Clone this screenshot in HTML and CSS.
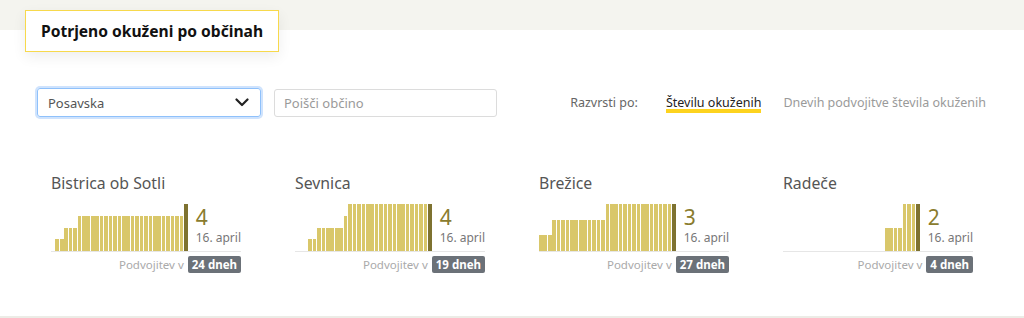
FILE: index.html
```html
<!DOCTYPE html>
<html lang="sl">
<head>
<meta charset="utf-8">
<link rel="stylesheet" href="styles.css">
</head>
<body>
<div class="page">
  <div class="wrap">
    <div class="title-box"><h2>Potrjeno okuženi po občinah</h2></div>

    <div class="controls">
      <div class="select">
        <span>Posavska</span>
        <svg class="chev" width="14" height="9" viewBox="0 0 14 9"><path d="M1.5 1.5 L7 7 L12.5 1.5" fill="none" stroke="#222" stroke-width="2.2" stroke-linecap="round" stroke-linejoin="round"/></svg>
      </div>
      <div class="search">Poišči občino</div>
      <div class="sort">
        <span class="sort-label">Razvrsti po:</span>
        <span class="sort-opt active">Številu okuženih</span>
        <span class="sort-opt">Dnevih podvojitve števila okuženih</span>
      </div>
    </div>

    <div class="cards">
      <div class="card">
        <div class="card-title">Bistrica ob Sotli</div>
        <div class="chart-row">
          <div class="bars">
            <i style="height:0"></i><i style="height:11.75px"></i><i style="height:11.75px"></i><i style="height:23.5px"></i><i style="height:23.5px"></i><i style="height:23.5px"></i><i style="height:35.25px"></i><i style="height:35.25px"></i><i style="height:35.25px"></i><i style="height:35.25px"></i><i style="height:35.25px"></i><i style="height:35.25px"></i><i style="height:35.25px"></i><i style="height:35.25px"></i><i style="height:35.25px"></i><i style="height:35.25px"></i><i style="height:35.25px"></i><i style="height:35.25px"></i><i style="height:35.25px"></i><i style="height:35.25px"></i><i style="height:35.25px"></i><i style="height:35.25px"></i><i style="height:35.25px"></i><i style="height:35.25px"></i><i style="height:35.25px"></i><i style="height:35.25px"></i><i style="height:35.25px"></i><i style="height:35.25px"></i><i style="height:35.25px"></i><i style="height:35.25px"></i><i class="last" style="height:47px"></i>
          </div>
          <div class="value"><div class="num">4</div><div class="date">16. april</div></div>
        </div>
        <div class="foot">Podvojitev v <span class="badge">24 dneh</span></div>
      </div>

      <div class="card">
        <div class="card-title">Sevnica</div>
        <div class="chart-row">
          <div class="bars">
            <i style="height:0"></i><i style="height:0"></i><i style="height:0"></i><i style="height:11.75px"></i><i style="height:11.75px"></i><i style="height:23.5px"></i><i style="height:23.5px"></i><i style="height:23.5px"></i><i style="height:23.5px"></i><i style="height:23.5px"></i><i style="height:23.5px"></i><i style="height:35.25px"></i><i style="height:47px"></i><i style="height:47px"></i><i style="height:47px"></i><i style="height:47px"></i><i style="height:47px"></i><i style="height:47px"></i><i style="height:47px"></i><i style="height:47px"></i><i style="height:47px"></i><i style="height:47px"></i><i style="height:47px"></i><i style="height:47px"></i><i style="height:47px"></i><i style="height:47px"></i><i style="height:47px"></i><i style="height:47px"></i><i style="height:47px"></i><i style="height:47px"></i><i class="last" style="height:47px"></i>
          </div>
          <div class="value"><div class="num">4</div><div class="date">16. april</div></div>
        </div>
        <div class="foot">Podvojitev v <span class="badge">19 dneh</span></div>
      </div>

      <div class="card">
        <div class="card-title">Brežice</div>
        <div class="chart-row">
          <div class="bars">
            <i style="height:15.67px"></i><i style="height:15.67px"></i><i style="height:15.67px"></i><i style="height:31.33px"></i><i style="height:31.33px"></i><i style="height:31.33px"></i><i style="height:31.33px"></i><i style="height:31.33px"></i><i style="height:31.33px"></i><i style="height:31.33px"></i><i style="height:31.33px"></i><i style="height:31.33px"></i><i style="height:31.33px"></i><i style="height:31.33px"></i><i style="height:31.33px"></i><i style="height:47px"></i><i style="height:47px"></i><i style="height:47px"></i><i style="height:47px"></i><i style="height:47px"></i><i style="height:47px"></i><i style="height:47px"></i><i style="height:47px"></i><i style="height:47px"></i><i style="height:47px"></i><i style="height:47px"></i><i style="height:47px"></i><i style="height:47px"></i><i style="height:47px"></i><i style="height:47px"></i><i class="last" style="height:47px"></i>
          </div>
          <div class="value"><div class="num">3</div><div class="date">16. april</div></div>
        </div>
        <div class="foot">Podvojitev v <span class="badge">27 dneh</span></div>
      </div>

      <div class="card">
        <div class="card-title">Radeče</div>
        <div class="chart-row">
          <div class="bars">
            <i style="height:0"></i><i style="height:0"></i><i style="height:0"></i><i style="height:0"></i><i style="height:0"></i><i style="height:0"></i><i style="height:0"></i><i style="height:0"></i><i style="height:0"></i><i style="height:0"></i><i style="height:0"></i><i style="height:0"></i><i style="height:0"></i><i style="height:0"></i><i style="height:0"></i><i style="height:0"></i><i style="height:0"></i><i style="height:0"></i><i style="height:0"></i><i style="height:0"></i><i style="height:0"></i><i style="height:0"></i><i style="height:0"></i><i style="height:23.5px"></i><i style="height:23.5px"></i><i style="height:23.5px"></i><i style="height:23.5px"></i><i style="height:47px"></i><i style="height:47px"></i><i style="height:47px"></i><i class="last" style="height:47px"></i>
          </div>
          <div class="value"><div class="num">2</div><div class="date">16. april</div></div>
        </div>
        <div class="foot">Podvojitev v <span class="badge">4 dneh</span></div>
      </div>
    </div>
  </div>
  <div class="bottom-band"></div>
</div>
</body>
</html>
```

FILE: styles.css
```css
* { box-sizing: border-box; }

html, body {
  margin: 0;
  padding: 0;
  background: #ffffff;
}

body {
  font-family: "Noto Sans", "Open Sans", Arial, sans-serif;
  color: #333;
  width: 1024px;
  height: 318px;
  overflow: hidden;
}

.page {
  background: linear-gradient(#f4f4ef 0, #f4f4ef 30px, #ffffff 30px);
}

.wrap {
  padding: 10px 0 0 25px;
  height: 316px;
}

.title-box {
  display: inline-block;
  background: #fff;
  border: 1px solid #f7d94c;
  box-shadow: 0 5px 14px rgba(0, 0, 0, 0.07);
  height: 42px;
  padding: 0 15px;
}

.title-box h2 {
  margin: 0;
  font-size: 15.6px;
  font-weight: 700;
  line-height: 40px;
  color: #111;
}

/* controls */
.controls {
  display: flex;
  align-items: center;
  margin: 36px 38px 0 12px;
  height: 29px;
}

.select {
  width: 224px;
  height: 29px;
  border: 1px solid #8fc1fb;
  box-shadow: 0 0 0 2px #cfe3fd;
  border-radius: 3px;
  display: flex;
  align-items: center;
  justify-content: space-between;
  padding: 0 11px 0 10px;
  font-size: 13px;
  color: #555;
}

.chev { display: block; }

.search {
  margin-left: 13px;
  width: 223px;
  height: 28px;
  border: 1px solid #dcdcdc;
  border-radius: 3px;
  display: flex;
  align-items: center;
  padding: 0 9px;
  font-size: 13px;
  color: #9a9a9a;
}

.sort {
  margin-left: auto;
  display: flex;
  align-items: center;
  font-size: 12.5px;
}

.sort-label {
  color: #666;
  margin-right: 28px;
}

.sort-opt {
  color: #9a9a9a;
}

.sort-opt + .sort-opt { margin-left: 22px; }

.sort-opt.active {
  color: #222;
  box-shadow: inset 0 -4px 0 #fdd31f;
  padding-bottom: 2px;
  margin-bottom: -2px;
}

/* cards */
.cards {
  display: grid;
  grid-template-columns: repeat(4, 190px);
  column-gap: 54px;
  margin: 55px 0 0 26px;
}

.card-title {
  font-size: 15.8px;
  line-height: 22px;
  color: #555;
  margin-bottom: 10px;
}

.chart-row {
  display: flex;
  align-items: flex-start;
  border-bottom: 1px solid #e6e6e6;
}

.bars {
  width: 139px;
  height: 47px;
  display: grid;
  grid-template-columns: repeat(31, 1fr);
  column-gap: 0.8px;
  align-items: end;
}

.bars i {
  display: block;
  background: #d9c76a;
}

.bars i.last { background: #7e7230; }

.value {
  margin-left: 8px;
  white-space: nowrap;
}

.num {
  font-size: 21px;
  line-height: 26px;
  color: #8a7c2e;
}

.date {
  font-size: 12px;
  line-height: 15px;
  color: #777;
}

.foot {
  margin-top: 4px;
  display: flex;
  justify-content: flex-end;
  align-items: center;
  font-size: 11.5px;
  color: #aaa;
  gap: 4px;
}

.badge {
  background: #6b7178;
  color: #fff;
  font-weight: 700;
  font-size: 11.5px;
  line-height: 17px;
  padding: 0 4px;
  border-radius: 2px;
}

.bottom-band {
  height: 2px;
  background: #ecece6;
}
```
